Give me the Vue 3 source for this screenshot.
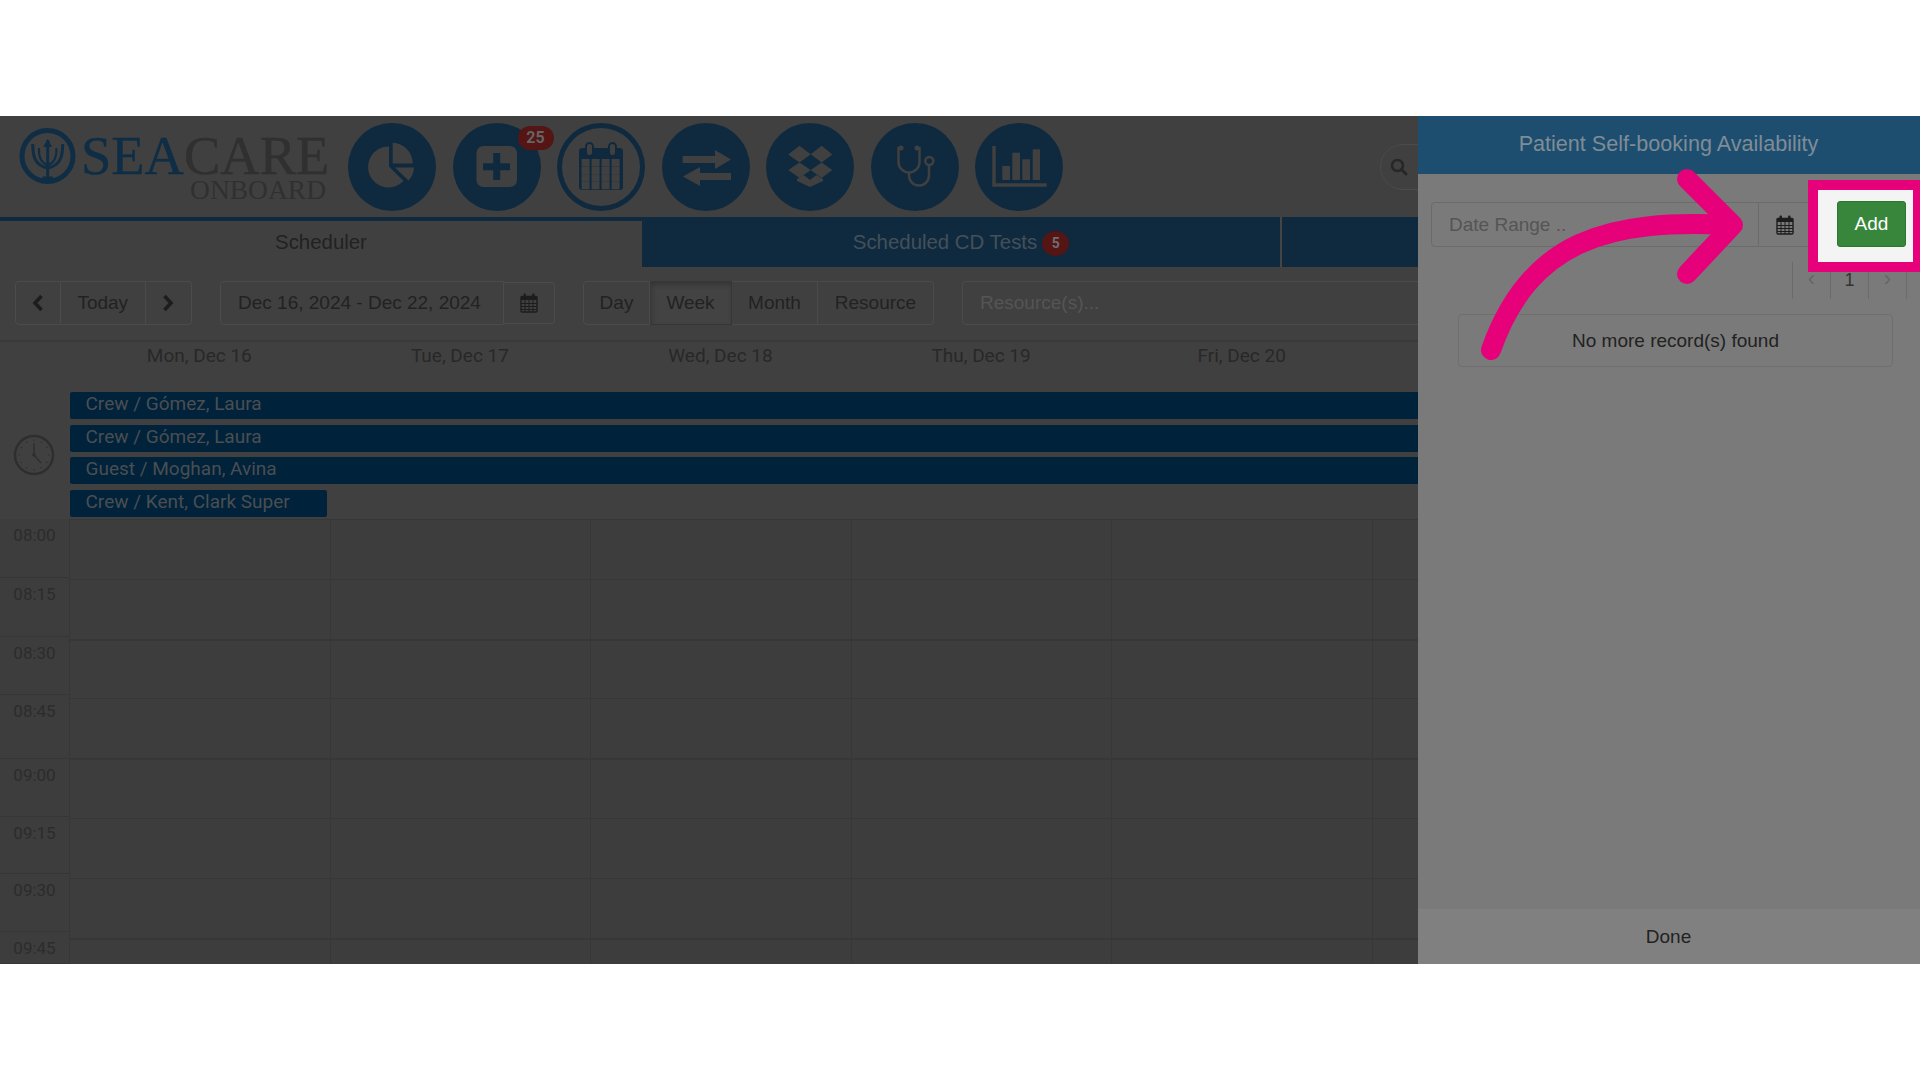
<template>
  <div class="page">
    <div class="band">
      <div class="main">
        <!-- top header -->
        <div class="header">
          <div class="logo">
            <svg class="logo-mark" width="58" height="58" viewBox="0 0 58 58">
              <circle cx="28.5" cy="28" r="25.5" fill="none" stroke="#0f2e45" stroke-width="5" />
              <path d="M28.7 12v38.5M23.5 50h10.5" fill="none" stroke="#0f2e45" stroke-width="3" />
              <path d="M28.7 11l-4.5 8h9z" fill="#0f2e45" />
              <path d="M13.7 16c0 14 3 21.500 15 24c12-2.500 15-10 15-24" fill="none" stroke="#0f2e45" stroke-width="3" />
              <path d="M20 20c-.5 9 2 15 8.700 17c6.700-2 9.200-8 8.700-17" fill="none" stroke="#0f2e45" stroke-width="2" />
            </svg>
            <div class="logo-text">
              <div class="logo-name"><span class="sea">SEA</span><span class="care">CARE</span></div>
              <div class="logo-sub">ONBOARD</div>
            </div>
          </div>

          <div class="circles">
            <div class="circle">
              <svg viewBox="0 0 88 88">
                <path d="M41 23.500A20.500 20.500 0 1 0 55.500 58L41 43.500Z" fill="#404040" />
                <path d="M44.700 19.700A21 21 0 0 1 64.700 40.500H44.700Z" fill="#404040" />
                <path d="M47 44.500H66A20 20 0 0 1 60.500 57.500Z" fill="#404040" />
              </svg>
            </div>
            <div class="circle">
              <svg viewBox="0 0 88 88">
                <rect x="23.500" y="23" width="40.500" height="41" rx="7" fill="#404040" />
                <path d="M30 40.200H40.200V30H47.200V40.200H57V47.200H47.200V57H40.200V47.200H30Z" fill="#0f2a3f" />
              </svg>
              <span class="badge-count">25</span>
            </div>
            <div class="circle ring">
              <svg viewBox="0 0 88 88">
                <rect x="22" y="25" width="44" height="42" rx="3" fill="#0f2a3f" />
                <rect x="29" y="20" width="7" height="13" rx="3.500" fill="#404040" stroke="#0f2a3f" stroke-width="2" />
                <rect x="52" y="20" width="7" height="13" rx="3.500" fill="#404040" stroke="#0f2a3f" stroke-width="2" />
                <rect v-for="c in calCells" :key="c.id" :x="c.x" :y="c.y" width="8" height="7.500" fill="#404040" />
              </svg>
            </div>
            <div class="circle">
              <svg viewBox="0 0 88 88">
                <path d="M20.700 33H53V27L69 36.500L53 46V40H20.700Z" fill="#404040" />
                <path d="M69 50V57H38V63L21 53.500L38 44V50Z" fill="#404040" />
              </svg>
            </div>
            <div class="circle">
              <svg viewBox="0 0 88 88">
                <path d="M22.300 31.500L33.500 22.700L44.700 31.300L33.500 39.500Z" fill="#404040" />
                <path d="M44.700 31.300L55.700 22.700L66.300 31.500L55.700 39.500Z" fill="#404040" />
                <path d="M22.300 47L33.500 39.500L44.700 47L33.500 55Z" fill="#404040" />
                <path d="M44.700 47L55.700 39.500L66.300 47L55.700 55Z" fill="#404040" />
                <path d="M31 56L37.500 52L44 57L50.500 52L57 56V58L44 64L31 58Z" fill="#404040" />
              </svg>
            </div>
            <div class="circle">
              <svg viewBox="0 0 88 88">
                <path d="M30 25H27.500V39A10.500 10.500 0 0 0 48.500 39V25H46M38 49.500V52.500A10 10 0 0 0 58 52.500V42" fill="none" stroke="#404040" stroke-width="2.500" />
                <circle cx="30" cy="25" r="2.500" fill="#404040" />
                <circle cx="46" cy="25" r="2.500" fill="#404040" />
                <circle cx="58.300" cy="38" r="4" fill="#0f2a3f" stroke="#404040" stroke-width="2.500" />
              </svg>
            </div>
            <div class="circle">
              <svg viewBox="0 0 88 88">
                <path d="M17.300 23H20.700V60.300H71.700V63.700H17.300Z" fill="#404040" />
                <rect x="27.300" y="43" width="7.700" height="14" fill="#404040" />
                <rect x="37.300" y="29.700" width="7.700" height="27.300" fill="#404040" />
                <rect x="47.300" y="36.300" width="7.700" height="20.700" fill="#404040" />
                <rect x="57.700" y="26.300" width="7.300" height="30.700" fill="#404040" />
              </svg>
            </div>
          </div>

          <div class="search-pill">
            <svg width="18" height="18" viewBox="0 0 18 18">
              <circle cx="7.500" cy="7.500" r="5.500" fill="none" stroke="#272727" stroke-width="2.600" />
              <path d="M11.500 11.500L16 16" stroke="#272727" stroke-width="3" stroke-linecap="round" />
            </svg>
          </div>
        </div>

        <!-- tabs -->
        <div class="tabs">
          <div class="tab active">Scheduler</div>
          <div class="tab">Scheduled CD Tests <span class="tab-badge">5</span></div>
          <div class="tab tab-rest"></div>
        </div>

        <!-- toolbar -->
        <div class="toolbar">
          <div class="group nav">
            <div class="btn btn-prev">
              <svg width="12" height="18" viewBox="0 0 12 18"><path d="M9.500 2L3 9l6.500 7" fill="none" stroke="#1d1d1d" stroke-width="3.600" /></svg>
            </div>
            <div class="btn btn-today">Today</div>
            <div class="btn btn-next">
              <svg width="12" height="18" viewBox="0 0 12 18"><path d="M2.500 2L9 9l-6.500 7" fill="none" stroke="#1d1d1d" stroke-width="3.600" /></svg>
            </div>
          </div>
          <div class="group date">
            <div class="btn date-value">Dec 16, 2024 - Dec 22, 2024</div>
            <div class="btn date-addon">
              <svg width="18" height="20" viewBox="0 0 18 20">
                <rect x="1" y="3.500" width="16" height="15.500" rx="1" fill="none" stroke="#1d1d1d" stroke-width="1.400" />
                <rect x="1" y="3.500" width="16" height="3.500" fill="#1d1d1d" />
                <rect x="3.500" y="0.500" width="2.500" height="5" rx="1" fill="#1d1d1d" />
                <rect x="12" y="0.500" width="2.500" height="5" rx="1" fill="#1d1d1d" />
                <path d="M1 10.500H17M1 13.500H17M1 16.500H17M5 7V19M9 7V19M13 7V19" stroke="#1d1d1d" stroke-width="1" />
              </svg>
            </div>
          </div>
          <div class="group views">
            <div class="btn view-day">Day</div>
            <div class="btn view-week">Week</div>
            <div class="btn view-month">Month</div>
            <div class="btn view-res">Resource</div>
          </div>
          <div class="resource-input">Resource(s)...</div>
        </div>

        <!-- calendar -->
        <div class="day-heads">
          <div v-for="d in days" :key="d" class="day-head">{{ d }}</div>
        </div>
        <div class="allday">
          <div class="clock-cell">
            <svg width="42" height="42" viewBox="0 0 42 42">
              <circle cx="21" cy="21" r="19" fill="none" stroke="#2e2e2e" stroke-width="2.400" />
              <line v-for="a in ticks" :key="a" x1="21" y1="5.500" x2="21" y2="7" stroke="#2e2e2e" stroke-width="1.200" :transform="`rotate(${a} 21 21)`" />
              <path d="M21 9V21L28 29" fill="none" stroke="#2e2e2e" stroke-width="1.400" />
              <circle cx="21" cy="21" r="1.800" fill="#2e2e2e" />
            </svg>
          </div>
          <div class="bars">
            <div v-for="b in bars" :key="b.id" class="bar" :class="{ short: b.short }">{{ b.label }}</div>
          </div>
        </div>
        <div class="grid">
          <div class="times">
            <div v-for="t in times" :key="t.label" class="time" :style="{ height: t.h + 'px' }">{{ t.label }}</div>
          </div>
          <div class="slots">
            <div v-for="(r, i) in 8" :key="r" class="slot-row" :class="{ hour: thickRows.includes(i) }">
              <div v-for="c in 6" :key="c" class="slot"></div>
            </div>
          </div>
        </div>
      </div>

      <!-- side panel -->
      <div class="panel">
        <div class="panel-head">Patient Self-booking Availability</div>
        <div class="panel-body">
          <div class="range">
            <div class="range-input">Date Range ..</div>
            <div class="range-addon">
              <svg width="18" height="20" viewBox="0 0 18 20">
                <rect x="1" y="3.500" width="16" height="15.500" rx="1" fill="none" stroke="#1d1d1d" stroke-width="1.400" />
                <rect x="1" y="3.500" width="16" height="3.500" fill="#1d1d1d" />
                <rect x="3.500" y="0.500" width="2.500" height="5" rx="1" fill="#1d1d1d" />
                <rect x="12" y="0.500" width="2.500" height="5" rx="1" fill="#1d1d1d" />
                <path d="M1 10.500H17M1 13.500H17M1 16.500H17M5 7V19M9 7V19M13 7V19" stroke="#1d1d1d" stroke-width="1" />
              </svg>
            </div>
          </div>
          <div class="pager">
            <div class="page-cell faint">‹</div>
            <div class="page-cell num">1</div>
            <div class="page-cell faint">›</div>
          </div>
          <div class="empty">No more record(s) found</div>
        </div>
        <div class="panel-foot">Done</div>
      </div>

      <!-- annotation over the panel -->
      <div class="highlight">
        <div class="add-btn">Add</div>
      </div>
      <svg class="arrow" width="300" height="200" viewBox="0 0 300 200">
        <path d="M11 181C50 70 130 50 250 56" fill="none" stroke="#e6007a" stroke-width="20" stroke-linecap="round" />
        <path d="M207 10L253 56L207 105" fill="none" stroke="#e6007a" stroke-width="20" stroke-linecap="round" stroke-linejoin="round" />
      </svg>
    </div>
  </div>
</template>

<script setup>
const days = ['Mon, Dec 16', 'Tue, Dec 17', 'Wed, Dec 18', 'Thu, Dec 19', 'Fri, Dec 20']

const bars = [
  { id: 1, label: 'Crew / Gómez, Laura' },
  { id: 2, label: 'Crew / Gómez, Laura' },
  { id: 3, label: 'Guest / Moghan, Avina' },
  { id: 4, label: 'Crew / Kent, Clark Super', short: true }
]

// the gutter rows are not quite the same height as the grid rows
const times = [
  { label: '08:00', h: 59 },
  { label: '08:15', h: 59 },
  { label: '08:30', h: 58 },
  { label: '08:45', h: 64 },
  { label: '09:00', h: 58 },
  { label: '09:15', h: 57 },
  { label: '09:30', h: 58 },
  { label: '09:45', h: 32 }
]

// these grid lines come out thicker in the screenshot
const thickRows = [2, 4, 7]

const ticks = Array.from({ length: 12 }, (_, i) => i * 30)

const calCells = []
for (let r = 0; r < 4; r++) {
  for (let c = 0; c < 4; c++) {
    calCells.push({ id: r * 4 + c, x: 24.6 + c * 10, y: 36 + r * 7.6 })
  }
}
</script>

<style>
html, body { background: #fff; }
</style>

<style scoped>
.page {
  height: 1080px;
  padding-top: 116px;
  box-sizing: border-box;
  background: #fff;
  font-family: "Liberation Sans", Arial, sans-serif;
  overflow: hidden;
}

.band {
  position: relative;
  display: flex;
  height: 848px;
  overflow: hidden;
}

.main {
  width: 1418px;
  flex: none;
  background: #404040;
  overflow: hidden;
  color: #222;
}

/* header */
.header {
  display: flex;
  align-items: flex-start;
  height: 101px;
  padding: 7px 0 0 19px;
  box-sizing: border-box;
}
.logo {
  display: flex;
  width: 329px;
  flex: none;
  padding-top: 5px;
}
.logo-mark { flex: none; }
.logo-text {
  width: 245px;
  margin-left: 4px;
  text-align: right;
  white-space: nowrap;
  font-family: "Liberation Serif", serif;
}
.logo-name {
  font-size: 54.500px;
  line-height: 46px;
  margin-top: 5px;
  -webkit-text-stroke: .4px;
}
.sea { color: #0f2e45; }
.care { color: #303030; }
.logo-sub {
  font-size: 27.500px;
  line-height: 22px;
  color: #303030;
}
.circles {
  display: flex;
  gap: 16.500px;
}
.circle {
  position: relative;
  width: 88px;
  height: 88px;
  border-radius: 50%;
  background: #0f2a3f;
  flex: none;
}
.circle svg {
  display: block;
  width: 88px;
  height: 88px;
}
.circle.ring {
  background: #404040;
  box-shadow: inset 0 0 0 5px #0f2a3f;
}
.badge-count {
  position: absolute;
  top: 3px;
  left: 65px;
  width: 36px;
  height: 24px;
  border-radius: 12px;
  background: #541514;
  color: #646464;
  font: 700 16px/24px Roboto, sans-serif;
  text-align: center;
}
.search-pill {
  display: flex;
  align-items: center;
  width: 60px;
  height: 46px;
  margin: 21px -22px 0 auto;
  padding-left: 9px;
  box-sizing: border-box;
  border: 1px solid #4b4b4b;
  border-radius: 23px;
}

/* tabs */
.tabs {
  display: flex;
  height: 50px;
  background: #0f2a3f;
}
.tab {
  display: flex;
  align-items: center;
  justify-content: center;
  gap: 5px;
  width: 640px;
  flex: none;
  box-sizing: border-box;
  border-right: 2px solid #454545;
  color: #43505a;
  font-size: 20.400px;
}
.tab.active {
  width: 642px;
  margin-top: 4px;
  padding-bottom: 4px;
  background: #404040;
  color: #222;
  border-right: 0;
}
.tab-rest {
  flex: 1;
  border-right: 0;
}
.tab-badge {
  width: 27px;
  height: 25px;
  margin-top: 2px;
  border-radius: 50%;
  background: #541514;
  color: #6e6e6e;
  font: 700 14px/25px Roboto, sans-serif;
  text-align: center;
}

/* toolbar */
.toolbar {
  display: flex;
  align-items: flex-start;
  height: 75px;
  padding: 14px 0 0 15px;
  box-sizing: border-box;
  border-bottom: 2px solid #3a3a3a;
  font-size: 19px;
}
.group { display: flex; height: 44px; }
.btn {
  display: flex;
  align-items: center;
  justify-content: center;
  height: 44px;
  box-sizing: border-box;
  border: 1px solid #4b4b4b;
  border-left-width: 0;
}
.btn:first-child {
  border-left-width: 1px;
  border-radius: 4px 0 0 4px;
}
.btn:last-child { border-radius: 0 4px 4px 0; }
.btn-prev { width: 46px; }
.btn-today { width: 84.500px; }
.btn-next { width: 46px; }
.date { margin-left: 28.500px; }
.date-value {
  width: 284px;
  justify-content: flex-start;
  padding-left: 17px;
  white-space: nowrap;
}
.date-addon { width: 51px; height: 42px; margin-top: 1px; }
.views { margin-left: 28px; }
.view-day { width: 67px; }
.view-week {
  width: 82px;
  background: #434343;
  border-color: #363636;
  box-shadow: inset 2px 3px 5px rgba(0, 0, 0, .2);
}
.view-month { width: 86px; }
.view-res { width: 116px; }
.resource-input {
  display: flex;
  align-items: center;
  width: 500px;
  height: 44px;
  margin-left: 28px;
  padding-left: 17px;
  flex: none;
  box-sizing: border-box;
  border: 1px solid #4b4b4b;
  border-radius: 4px;
  color: #555;
}

/* calendar */
.day-heads {
  display: flex;
  height: 50px;
  padding-left: 69px;
}
.day-head {
  width: 260.600px;
  flex: none;
  padding-top: 3px;
  text-align: center;
  color: #282828;
  font: 19px/22px Roboto, sans-serif;
}
.allday {
  display: flex;
  height: 127px;
}
.clock-cell {
  display: flex;
  align-items: center;
  justify-content: center;
  width: 70px;
  flex: none;
  height: 126px;
  box-sizing: border-box;
  padding-right: 2px;
}
.bars {
  flex: 1;
  display: flex;
  flex-direction: column;
  gap: 6px;
}
.bar {
  height: 27px;
  flex: none;
  padding-left: 15.500px;
  box-sizing: border-box;
  background: #00223a;
  border-radius: 2px 0 0 2px;
  color: #4a4e52;
  font: 19px/23px Roboto, sans-serif;
}
.bar:nth-child(3) { margin-top: -1px; }
.bar.short {
  width: 257px;
  border-radius: 2px;
}
.grid {
  display: flex;
  height: 445px;
  background: #3d3d3d;
}
.times {
  width: 69px;
  flex: none;
}
.time {
  padding-top: 5px;
  box-sizing: border-box;
  border-bottom: 1px solid #363636;
  text-align: center;
  color: #2c2c2c;
  font: 17px/22px Roboto, sans-serif;
}
.slots { flex: 1; }
.slot-row {
  display: flex;
  height: 59.800px;
  box-sizing: border-box;
  border-top: 1px solid #373737;
}
.slot-row.hour { border-top-width: 2px; }
.slot {
  width: 260.600px;
  flex: none;
  box-sizing: border-box;
  border-left: 1px solid #373737;
}

/* side panel */
.panel {
  flex: 1;
  display: flex;
  flex-direction: column;
  background: #7a7a7a;
  color: #222;
  font-size: 19px;
}
.panel-head {
  height: 58px;
  flex: none;
  background: #1d4e70;
  color: #7f8c96;
  font-size: 21.600px;
  line-height: 56px;
  text-align: center;
  padding-right: 1px;
}
.panel-body {
  flex: 1;
  padding: 28px 13px 0;
}
.range {
  display: flex;
  height: 45px;
}
.range-input {
  display: flex;
  align-items: center;
  width: 328px;
  flex: none;
  padding-left: 17px;
  box-sizing: border-box;
  border: 1px solid #6b6b6b;
  border-radius: 4px 0 0 4px;
  color: #555;
}
.range-addon {
  display: flex;
  align-items: center;
  justify-content: center;
  width: 52px;
  flex: none;
  box-sizing: border-box;
  border: 1px solid #6b6b6b;
  border-left: 0;
}
.pager {
  display: flex;
  justify-content: flex-end;
  height: 37px;
  margin-top: 15px;
}
.page-cell {
  width: 38px;
  height: 37px;
  box-sizing: border-box;
  border-left: 1px solid #6b6b6b;
  text-align: center;
  line-height: 34px;
  font-size: 22px;
  color: #666;
}
.page-cell:last-child {
  width: 39px;
  border-right: 1px solid #6b6b6b;
}
.page-cell.num {
  line-height: 36px;
  font-size: 18px;
  color: #333;
}
.empty {
  width: 435px;
  height: 53px;
  margin: 15px 0 0 27px;
  box-sizing: border-box;
  border: 1px solid #6f6f6f;
  border-radius: 4px;
  text-align: center;
  line-height: 52px;
}
.panel-foot {
  height: 55px;
  flex: none;
  background: #808080;
  text-align: center;
  line-height: 56px;
  padding-right: 1px;
}

/* annotation */
.highlight {
  position: absolute;
  top: 64px;
  left: 1808px;
  width: 112px;
  height: 92px;
  padding: 11px 0 0 19px;
  box-sizing: border-box;
  border: 10px solid #e6007a;
  border-right-width: 7px;
  background: #f4f4f4;
}
.add-btn {
  width: 69px;
  height: 46px;
  box-sizing: border-box;
  border: 1px solid #2e7532;
  border-radius: 3px;
  background: #37863b;
  color: #fff;
  font-size: 19px;
  line-height: 44px;
  text-align: center;
}
.arrow {
  position: absolute;
  top: 53px;
  left: 1480px;
}
</style>
